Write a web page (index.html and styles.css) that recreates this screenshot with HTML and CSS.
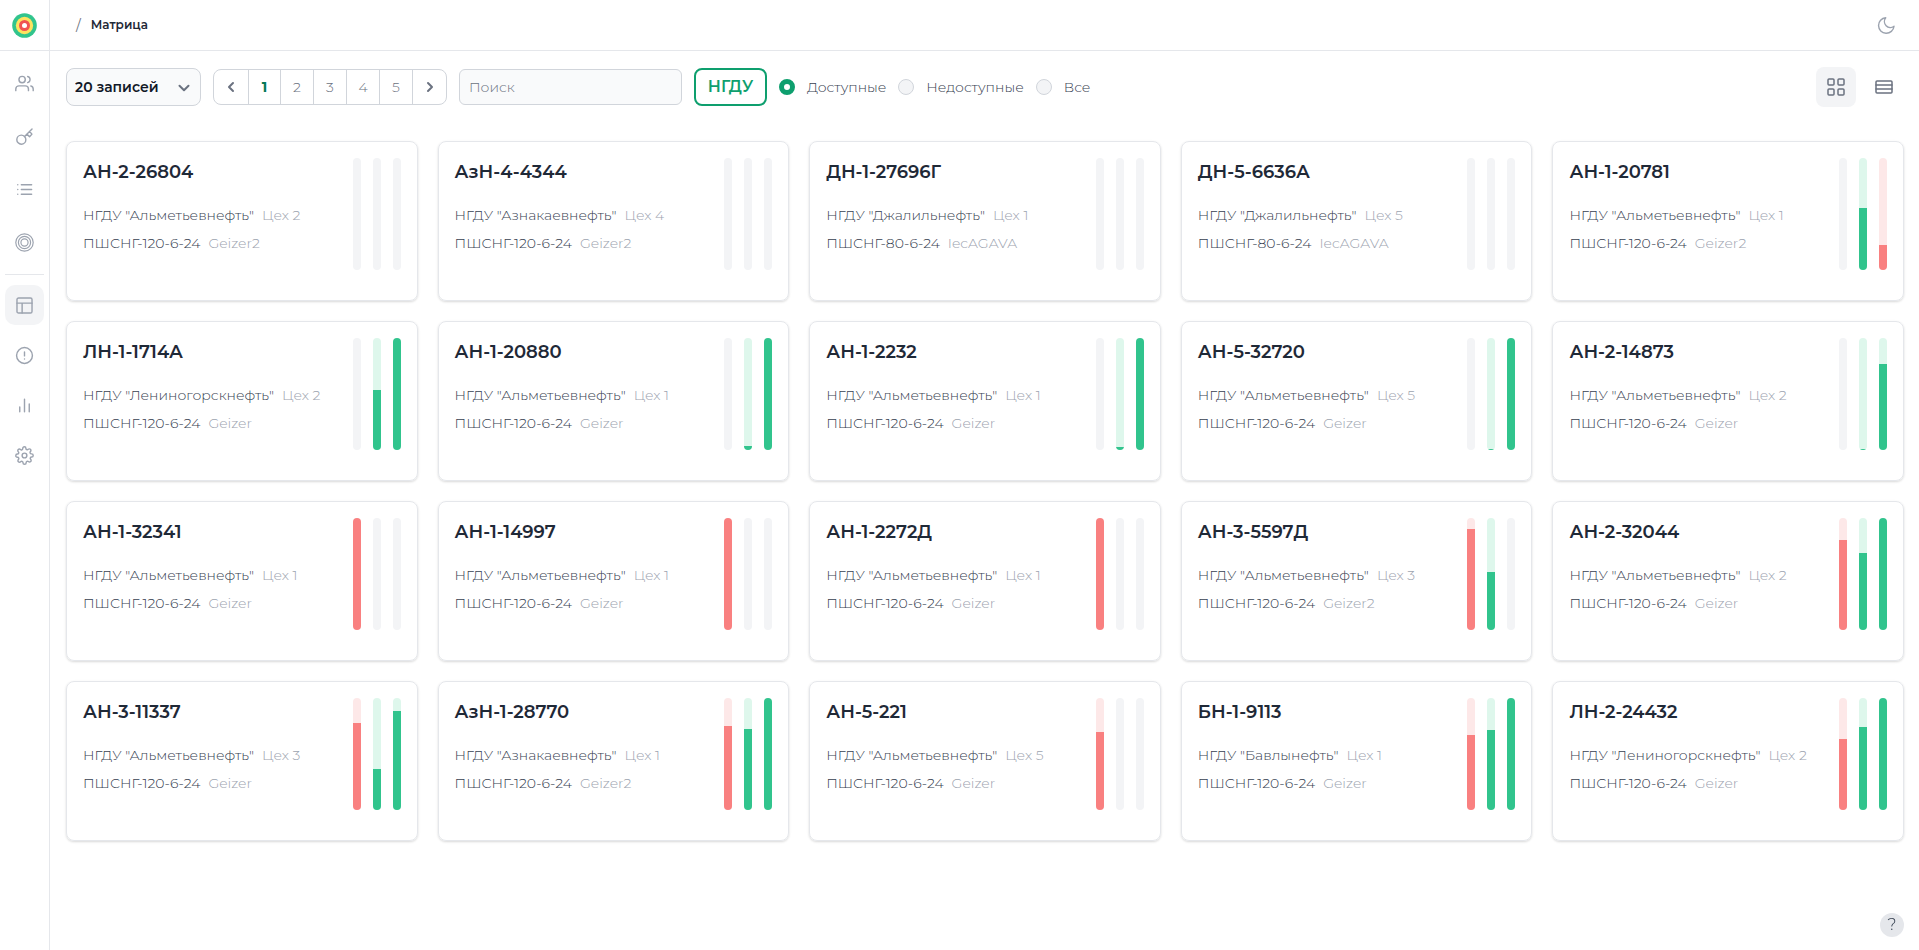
FILE: index.html
```html
<!DOCTYPE html>
<html lang="ru">
<head>
<meta charset="utf-8">
<meta name="viewport" content="width=device-width, initial-scale=1">
<title>Матрица</title>
<link rel="stylesheet" href="styles.css">
</head>
<body>
<div class="app">
  <aside class="sidebar">
    <a class="logo" href="#" aria-label="Главная">
      <svg width="25" height="25" viewBox="0 0 26 26"><circle cx="13" cy="13" r="12.8" fill="#31c48d"/><circle cx="13" cy="13" r="9" fill="#fde35f"/><circle cx="13" cy="13" r="5.7" fill="#f05252"/><circle cx="13" cy="13" r="2.6" fill="#fff"/></svg>
    </a>
    <nav class="nav nav-main">
      <a href="#" aria-label="Пользователи"><svg class="icon" viewBox="0 0 24 24"><path d="M17 21v-2a4 4 0 0 0-4-4H5a4 4 0 0 0-4 4v2"/><circle cx="9" cy="7" r="4"/><path d="M23 21v-2a4 4 0 0 0-3-3.87M16 3.13a4 4 0 0 1 0 7.75"/></svg></a>
      <a href="#" aria-label="Доступ"><svg class="icon" viewBox="0 0 24 24"><circle cx="8" cy="16" r="5.700"/><path d="M12.100 11.900 21.500 2.500M15 9l3.400 3.400 3-3.400-3-3.200"/></svg></a>
      <a href="#" aria-label="Список"><svg class="icon" viewBox="0 0 24 24"><path d="M8 6h13M8 12h13M8 18h13M3.500 6h.01M3.500 12h.01M3.500 18h.01"/></svg></a>
      <a href="#" aria-label="Цели"><svg class="icon thin" viewBox="0 0 24 24"><circle cx="12" cy="12" r="11"/><circle cx="12" cy="12" r="7.700"/><circle cx="12" cy="12" r="4.500"/></svg></a>
    </nav>
    <nav class="nav nav-tools">
      <a class="active" href="#" aria-label="Матрица" aria-current="page"><svg class="icon" viewBox="0 0 24 24"><rect x="2.500" y="2.500" width="19" height="19" rx="2"/><path d="M2.500 9h19M9 21.500V9"/></svg></a>
      <a href="#" aria-label="События"><svg class="icon" viewBox="0 0 24 24"><circle cx="12" cy="12" r="10"/><path d="M12 7.500v5M12 16.500h.01"/></svg></a>
      <a href="#" aria-label="Графики"><svg class="icon" viewBox="0 0 24 24"><path d="M18 20V10M12 20V4M6 20v-6"/></svg></a>
      <a href="#" aria-label="Настройки"><svg class="icon" viewBox="0 0 24 24"><circle cx="12" cy="12" r="3"/><path d="M19.400 15a1.650 1.650 0 0 0 .33 1.820l.06.06a2 2 0 1 1-2.830 2.830l-.06-.06a1.650 1.650 0 0 0-2.800 1.170V21a2 2 0 0 1-4 0v-.09a1.650 1.650 0 0 0-2.900-1.080l-.06.06a2 2 0 1 1-2.830-2.830l.06-.06a1.650 1.650 0 0 0-1.170-2.800H3a2 2 0 0 1 0-4h.09a1.650 1.650 0 0 0 1.080-2.900l-.06-.06a2 2 0 1 1 2.830-2.830l.06.06a1.650 1.650 0 0 0 2.800-1.170V3a2 2 0 0 1 4 0v.09a1.650 1.650 0 0 0 2.820 1.170l.06-.06a2 2 0 1 1 2.830 2.830l-.06.06a1.650 1.650 0 0 0 1.170 2.820H21a2 2 0 0 1 0 4h-.09a1.650 1.650 0 0 0-1.510 1z"/></svg></a>
    </nav>
  </aside>
  <div class="page">
    <header class="topbar">
      <div class="crumbs"><span class="slash">/</span><h1>Матрица</h1></div>
      <button class="theme" type="button" aria-label="Тёмная тема"><svg class="icon" viewBox="0 0 24 24"><path d="M21.500 13A9.800 9.800 0 1 1 11 2.200 7.600 7.600 0 0 0 21.500 13z"/></svg></button>
    </header>
    <main class="content">
      <div class="toolbar">
        <div class="select-box">
          <select aria-label="Записей на странице"><option>20 записей</option><option>50 записей</option></select>
          <svg class="chevron" viewBox="0 0 12 8"><path d="M1.500 1.800 6 6.200l4.500-4.400"/></svg>
        </div>
        <nav class="pager" aria-label="Страницы">
          <button type="button" aria-label="Назад"><svg viewBox="0 0 8 12"><path d="M6 2 2 6l4 4"/></svg></button>
          <button type="button" class="current">1</button>
          <button type="button">2</button>
          <button type="button">3</button>
          <button type="button">4</button>
          <button type="button">5</button>
          <button type="button" aria-label="Вперёд"><svg viewBox="0 0 8 12"><path d="m2 2 4 4-4 4"/></svg></button>
        </nav>
        <input class="search" type="text" placeholder="Поиск" aria-label="Поиск">
        <button class="org" type="button">НГДУ</button>
        <div class="radios">
          <label><input type="radio" name="state" checked>Доступные</label>
          <label><input type="radio" name="state">Недоступные</label>
          <label><input type="radio" name="state">Все</label>
        </div>
        <div class="views">
          <button class="active" type="button" aria-label="Плитка"><svg viewBox="0 0 20 20"><rect x="2" y="2" width="6" height="6" rx="1"/><rect x="12" y="2" width="6" height="6" rx="1"/><rect x="2" y="12" width="6" height="6" rx="1"/><rect x="12" y="12" width="6" height="6" rx="1"/></svg></button>
          <button type="button" aria-label="Таблица"><svg viewBox="0 0 20 20"><rect x="2" y="4" width="16" height="12" rx="1"/><path d="M2 8h16M2 12h16"/></svg></button>
        </div>
      </div>

      <section class="cards">
        <article class="card"><div class="info"><h2>АН-2-26804</h2><p>НГДУ "Альметьевнефть"<span>Цех 2</span></p><p>ПШСНГ-120-6-24<span>Geizer2</span></p></div><div class="bars"><i></i><i></i><i></i></div></article>
        <article class="card"><div class="info"><h2>АзН-4-4344</h2><p>НГДУ "Азнакаевнефть"<span>Цех 4</span></p><p>ПШСНГ-120-6-24<span>Geizer2</span></p></div><div class="bars"><i></i><i></i><i></i></div></article>
        <article class="card"><div class="info"><h2>ДН-1-27696Г</h2><p>НГДУ "Джалильнефть"<span>Цех 1</span></p><p>ПШСНГ-80-6-24<span>IecAGAVA</span></p></div><div class="bars"><i></i><i></i><i></i></div></article>
        <article class="card"><div class="info"><h2>ДН-5-6636А</h2><p>НГДУ "Джалильнефть"<span>Цех 5</span></p><p>ПШСНГ-80-6-24<span>IecAGAVA</span></p></div><div class="bars"><i></i><i></i><i></i></div></article>
        <article class="card"><div class="info"><h2>АН-1-20781</h2><p>НГДУ "Альметьевнефть"<span>Цех 1</span></p><p>ПШСНГ-120-6-24<span>Geizer2</span></p></div><div class="bars"><i></i><i class="green"><b style="height:55%"></b></i><i class="red"><b style="height:22%"></b></i></div></article>

        <article class="card"><div class="info"><h2>ЛН-1-1714А</h2><p>НГДУ "Лениногорскнефть"<span>Цех 2</span></p><p>ПШСНГ-120-6-24<span>Geizer</span></p></div><div class="bars"><i></i><i class="green"><b style="height:54%"></b></i><i class="green"><b style="height:100%"></b></i></div></article>
        <article class="card"><div class="info"><h2>АН-1-20880</h2><p>НГДУ "Альметьевнефть"<span>Цех 1</span></p><p>ПШСНГ-120-6-24<span>Geizer</span></p></div><div class="bars"><i></i><i class="green"><b style="height:4%"></b></i><i class="green"><b style="height:100%"></b></i></div></article>
        <article class="card"><div class="info"><h2>АН-1-2232</h2><p>НГДУ "Альметьевнефть"<span>Цех 1</span></p><p>ПШСНГ-120-6-24<span>Geizer</span></p></div><div class="bars"><i></i><i class="green"><b style="height:3%"></b></i><i class="green"><b style="height:100%"></b></i></div></article>
        <article class="card"><div class="info"><h2>АН-5-32720</h2><p>НГДУ "Альметьевнефть"<span>Цех 5</span></p><p>ПШСНГ-120-6-24<span>Geizer</span></p></div><div class="bars"><i></i><i class="green"><b style="height:1%"></b></i><i class="green"><b style="height:100%"></b></i></div></article>
        <article class="card"><div class="info"><h2>АН-2-14873</h2><p>НГДУ "Альметьевнефть"<span>Цех 2</span></p><p>ПШСНГ-120-6-24<span>Geizer</span></p></div><div class="bars"><i></i><i class="green"><b style="height:1%"></b></i><i class="green"><b style="height:77%"></b></i></div></article>

        <article class="card"><div class="info"><h2>АН-1-32341</h2><p>НГДУ "Альметьевнефть"<span>Цех 1</span></p><p>ПШСНГ-120-6-24<span>Geizer</span></p></div><div class="bars"><i class="red"><b style="height:100%"></b></i><i></i><i></i></div></article>
        <article class="card"><div class="info"><h2>АН-1-14997</h2><p>НГДУ "Альметьевнефть"<span>Цех 1</span></p><p>ПШСНГ-120-6-24<span>Geizer</span></p></div><div class="bars"><i class="red"><b style="height:100%"></b></i><i></i><i></i></div></article>
        <article class="card"><div class="info"><h2>АН-1-2272Д</h2><p>НГДУ "Альметьевнефть"<span>Цех 1</span></p><p>ПШСНГ-120-6-24<span>Geizer</span></p></div><div class="bars"><i class="red"><b style="height:100%"></b></i><i></i><i></i></div></article>
        <article class="card"><div class="info"><h2>АН-3-5597Д</h2><p>НГДУ "Альметьевнефть"<span>Цех 3</span></p><p>ПШСНГ-120-6-24<span>Geizer2</span></p></div><div class="bars"><i class="red"><b style="height:90%"></b></i><i class="green"><b style="height:52%"></b></i><i></i></div></article>
        <article class="card"><div class="info"><h2>АН-2-32044</h2><p>НГДУ "Альметьевнефть"<span>Цех 2</span></p><p>ПШСНГ-120-6-24<span>Geizer</span></p></div><div class="bars"><i class="red"><b style="height:80%"></b></i><i class="green"><b style="height:69%"></b></i><i class="green"><b style="height:100%"></b></i></div></article>

        <article class="card"><div class="info"><h2>АН-3-11337</h2><p>НГДУ "Альметьевнефть"<span>Цех 3</span></p><p>ПШСНГ-120-6-24<span>Geizer</span></p></div><div class="bars"><i class="red"><b style="height:78%"></b></i><i class="green"><b style="height:37%"></b></i><i class="green"><b style="height:88%"></b></i></div></article>
        <article class="card"><div class="info"><h2>АзН-1-28770</h2><p>НГДУ "Азнакаевнефть"<span>Цех 1</span></p><p>ПШСНГ-120-6-24<span>Geizer2</span></p></div><div class="bars"><i class="red"><b style="height:75%"></b></i><i class="green"><b style="height:72%"></b></i><i class="green"><b style="height:100%"></b></i></div></article>
        <article class="card"><div class="info"><h2>АН-5-221</h2><p>НГДУ "Альметьевнефть"<span>Цех 5</span></p><p>ПШСНГ-120-6-24<span>Geizer</span></p></div><div class="bars"><i class="red"><b style="height:70%"></b></i><i></i><i></i></div></article>
        <article class="card"><div class="info"><h2>БН-1-9113</h2><p>НГДУ "Бавлынефть"<span>Цех 1</span></p><p>ПШСНГ-120-6-24<span>Geizer</span></p></div><div class="bars"><i class="red"><b style="height:67%"></b></i><i class="green"><b style="height:71%"></b></i><i class="green"><b style="height:100%"></b></i></div></article>
        <article class="card"><div class="info"><h2>ЛН-2-24432</h2><p>НГДУ "Лениногорскнефть"<span>Цех 2</span></p><p>ПШСНГ-120-6-24<span>Geizer</span></p></div><div class="bars"><i class="red"><b style="height:63%"></b></i><i class="green"><b style="height:74%"></b></i><i class="green"><b style="height:100%"></b></i></div></article>
      </section>
    </main>
  </div>
</div>
<button class="help" type="button" aria-label="Справка">?</button>
</body>
</html>
```
FILE: styles.css
```css
*, *::before, *::after { box-sizing: border-box; }

body {
  margin: 0;
  background: #fff;
  color: #374151;
  font-family: Montserrat, Inter, "Open Sans", sans-serif;
  font-size: 14px;
  font-weight: 300;
  line-height: 20px;
}

h1, h2, p { margin: 0; }
a { color: inherit; text-decoration: none; }
button, input, select { font: inherit; color: inherit; margin: 0; }
button { padding: 0; border: 0; background: none; cursor: pointer; }
svg { display: block; fill: none; stroke-linecap: round; stroke-linejoin: round; }

.app { display: flex; min-height: 100vh; }

.sidebar {
  flex: 0 0 50px;
  border-right: 1px solid #e5e7eb;
  color: #9ca3af;
}
.logo {
  display: flex;
  align-items: center;
  justify-content: center;
  height: 51px;
  border-bottom: 1px solid #e5e7eb;
}
.nav { display: flex; flex-direction: column; margin: 0 5px; }
.nav a {
  display: flex;
  align-items: center;
  justify-content: center;
  height: 40px;
  border-radius: 10px;
}
.nav a.active { background: #f3f4f6; }
.nav-main { gap: 13px; padding: 12px 0; border-bottom: 1px solid #e5e7eb; }
.nav-tools { gap: 10px; padding-top: 10px; }
.icon { width: 19px; height: 19px; stroke: currentColor; stroke-width: 1.8; }
.icon.thin { stroke-width: 1.5; }

.page { flex: 1; min-width: 0; }
.topbar {
  display: flex;
  align-items: center;
  justify-content: space-between;
  height: 51px;
  padding: 0 23px 0 26px;
  border-bottom: 1px solid #e5e7eb;
}
.crumbs { display: flex; gap: 10px; font-size: 12px; }
.slash { color: #6b7280; font-weight: 400; font-size: 14px; }
.crumbs h1 { color: #1f2937; font-size: 12px; line-height: 20px; font-weight: 600; }
.theme { color: #9ca3af; }

.content { padding: 16px 15px 16px 16px; }
.toolbar { display: flex; align-items: center; gap: 12px; margin-bottom: 34px; }

.select-box { position: relative; }
.select-box select {
  appearance: none;
  width: 135px;
  height: 38px;
  padding: 0 8px;
  border: 1px solid #d1d5db;
  border-radius: 8px;
  background: #f9fafb;
  color: #111827;
  font-weight: 600;
}
.chevron {
  position: absolute;
  right: 11px;
  top: 16px;
  width: 12px;
  height: 8px;
  stroke: #6b7280;
  stroke-width: 2;
  pointer-events: none;
}

.pager {
  display: flex;
  height: 36px;
  border: 1px solid #d1d5db;
  border-radius: 8px;
  color: #6b7280;
}
.pager button {
  display: flex;
  align-items: center;
  justify-content: center;
  width: 33px;
}
.pager button:first-child, .pager button:last-child { width: 34px; }
.pager button.current { width: 32px; color: #047857; font-weight: 700; }
.pager button + button { border-left: 1px solid #d1d5db; }
.pager svg { width: 8px; height: 12px; stroke: #6b7280; stroke-width: 2; }

.search {
  width: 223px;
  height: 36px;
  padding: 0 9px;
  border: 1px solid #d1d5db;
  border-radius: 6px;
  background: #f9fafb;
}
.search::placeholder { color: #6b7280; opacity: 1; }

.org {
  width: 73px;
  height: 38px;
  border: 2px solid #0e9f6e;
  border-radius: 8px;
  color: #0e9f6e;
  font-size: 16px;
  font-weight: 600;
}

.radios { display: flex; gap: 12px; }
.radios label { display: flex; align-items: center; gap: 12px; }
.radios input {
  appearance: none;
  width: 16px;
  height: 16px;
  border: 1px solid #d1d5db;
  border-radius: 50%;
  background: #f3f4f6;
}
.radios input:checked { border: 5px solid #0e9f6e; background: #fff; }

.views { display: flex; gap: 8px; margin-left: auto; }
.views button {
  display: flex;
  align-items: center;
  justify-content: center;
  width: 40px;
  height: 40px;
  border-radius: 8px;
}
.views button.active { background: #f3f4f6; }
.views svg { width: 20px; height: 20px; stroke: #6b7280; stroke-width: 1.5; }

.cards { display: grid; grid-template-columns: repeat(5, minmax(0, 1fr)); gap: 20px; }
.card {
  display: flex;
  justify-content: space-between;
  min-height: 160px;
  padding: 16px;
  border: 1px solid #e5e7eb;
  border-radius: 8px;
  box-shadow: 0 1px 3px rgba(0, 0, 0, .1), 0 1px 2px rgba(0, 0, 0, .06);
}
.info { line-height: 28px; white-space: nowrap; }
.info h2 {
  margin-bottom: 15px;
  color: #1f2937;
  font-size: 18px;
  line-height: 28px;
  font-weight: 600;
}
.info span { margin-left: 8px; color: #9ca3af; }

.bars { display: flex; gap: 12px; height: 112px; }
.bars i {
  display: flex;
  align-items: flex-end;
  width: 8px;
  border-radius: 4px;
  background: #f3f4f6;
  overflow: hidden;
}
.bars b { width: 100%; }
.bars .green { background: #def7ec; }
.bars .green b { background: #31c48d; }
.bars .red { background: #fde8e8; }
.bars .red b { background: #f98080; }

.help {
  position: fixed;
  right: 15px;
  bottom: 13px;
  width: 24px;
  height: 24px;
  border-radius: 50%;
  background: #e5e7eb;
  font-size: 16px;
}
```
